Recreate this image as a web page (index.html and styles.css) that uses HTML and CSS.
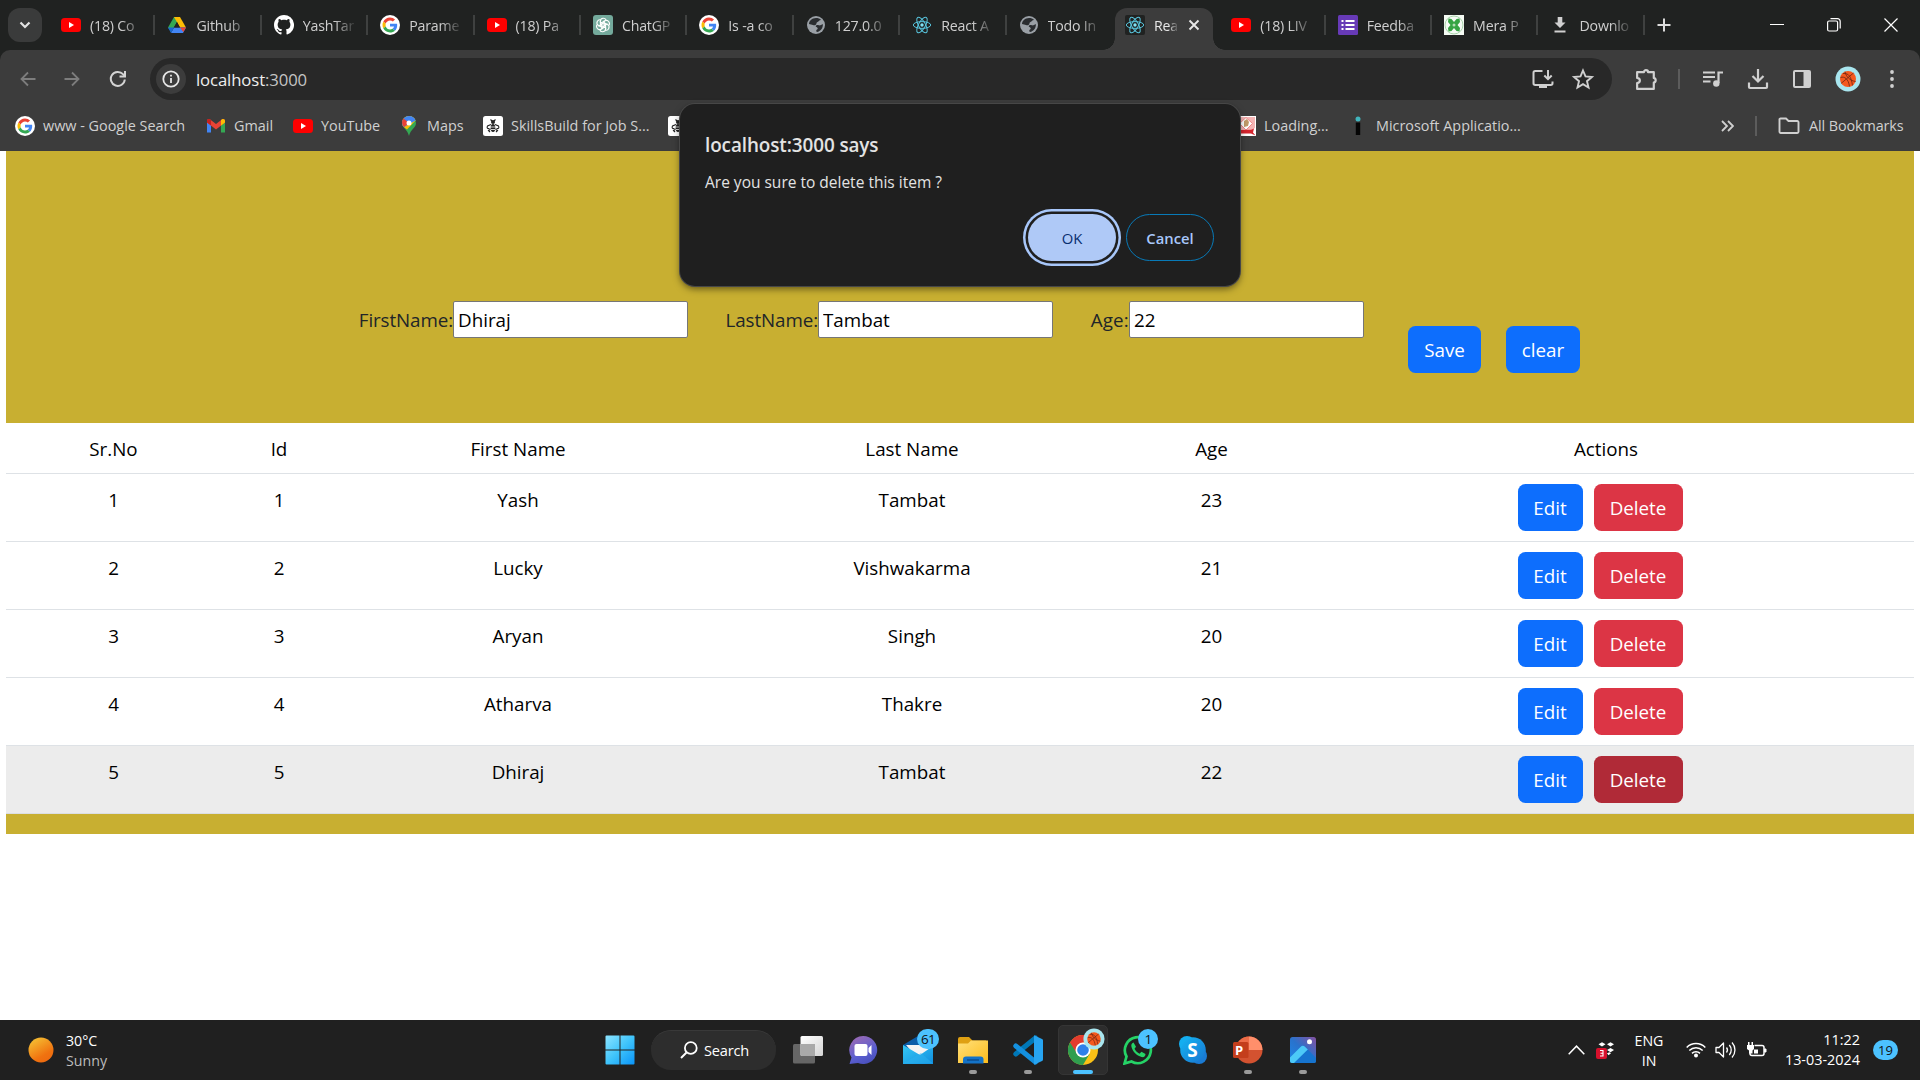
FILE: index.html
```html
<!DOCTYPE html>
<html lang="en">
<head>
<meta charset="utf-8">
<title>React App</title>
<link rel="stylesheet" href="styles.css">
</head>
<body>
<svg class="sprite" aria-hidden="true">
  <defs>
    <linearGradient id="g-win" x1="0" y1="0" x2="1" y2="1"><stop offset="0" stop-color="#8de4ff"/><stop offset=".5" stop-color="#3fc4fb"/><stop offset="1" stop-color="#0a94f8"/></linearGradient>
    <linearGradient id="g-sun" x1="0.1" y1="0" x2=".7" y2="1"><stop offset="0" stop-color="#f5c636"/><stop offset=".75" stop-color="#f0720f"/><stop offset="1" stop-color="#ee6a10"/></linearGradient>
    <linearGradient id="g-chat" x1="0" y1="0" x2=".5" y2="1"><stop offset="0" stop-color="#a56bb0"/><stop offset=".7" stop-color="#5b5fd0"/><stop offset="1" stop-color="#4c52c0"/></linearGradient>
    <linearGradient id="g-mail" x1="0" y1="0" x2="1" y2="1"><stop offset="0" stop-color="#35c8f5"/><stop offset="1" stop-color="#118fdf"/></linearGradient>
    <linearGradient id="g-fold" x1="0" y1="0" x2="1" y2="1"><stop offset="0" stop-color="#ffe07a"/><stop offset="1" stop-color="#fdbc1c"/></linearGradient>
    <linearGradient id="g-photo" x1="0" y1="1" x2="1" y2="0"><stop offset="0" stop-color="#1c86e8"/><stop offset=".5" stop-color="#2a72cc"/><stop offset="1" stop-color="#8650a0"/></linearGradient>
    <linearGradient id="g-task" x1="0" y1="0" x2="1" y2="1"><stop offset="0" stop-color="#fff"/><stop offset="1" stop-color="#d4d4d4"/></linearGradient>
    <linearGradient id="g-skype" x1="0" y1="0" x2="1" y2="1"><stop offset="0" stop-color="#15b4f2"/><stop offset="1" stop-color="#1877d2"/></linearGradient>
  </defs>
  <symbol id="youtube" viewBox="0 0 20 20"><rect y="3" width="20" height="14" rx="3.5" fill="#f00"/><path d="M8 7l5 3-5 3z" fill="#fff"/></symbol>
  <symbol id="drive" viewBox="0 0 20 20"><path d="M7 2h6L4 17 1 12.500z" fill="#34a853"/><path d="M7 2h6l6 10.500h-6z" fill="#fbbc04"/><path d="M7 12.500h12L16 18H4z" fill="#4285f4"/><path d="M13 12.500h6L16.300 17z" fill="#ea4335"/><path d="M10 7l3 5.500H7z" fill="#202221"/><path d="M1 12.500h6L4 18z" fill="#1967d2"/></symbol>
  <symbol id="github" viewBox="0 0 16 16"><path fill="#fff" d="M8 0C3.580 0 0 3.580 0 8c0 3.540 2.290 6.530 5.470 7.590.4.070.55-.17.55-.38 0-.19-.01-.82-.01-1.490-2.010.37-2.530-.49-2.690-.94-.09-.23-.48-.94-.82-1.130-.28-.15-.68-.52-.01-.53.63-.01 1.080.58 1.230.82.72 1.210 1.870.87 2.330.66.07-.52.28-.87.51-1.070-1.780-.2-3.640-.89-3.640-3.950 0-.87.31-1.590.82-2.150-.08-.2-.36-1.020.08-2.120 0 0 .67-.21 2.200.82.64-.18 1.320-.27 2-.27s1.360.09 2 .27c1.530-1.040 2.200-.82 2.200-.82.44 1.100.16 1.920.08 2.120.51.56.82 1.270.82 2.150 0 3.070-1.870 3.750-3.650 3.950.29.25.54.73.54 1.480 0 1.070-.01 1.930-.01 2.200 0 .21.15.46.55.38A8 8 0 0 0 8 0z"/></symbol>
  <symbol id="google" viewBox="0 0 48 48"><circle cx="24" cy="24" r="24" fill="#fff"/><g transform="translate(6 6) scale(.75)"><path fill="#EA4335" d="M24 9.500c3.540 0 6.710 1.220 9.210 3.600l6.850-6.850C35.900 2.380 30.470 0 24 0 14.620 0 6.510 5.380 2.560 13.220l7.980 6.190C12.430 13.720 17.740 9.500 24 9.500z"/><path fill="#4285F4" d="M46.980 24.550c0-1.570-.15-3.090-.38-4.550H24v9.020h12.940c-.58 2.960-2.260 5.480-4.780 7.180l7.730 6c4.510-4.180 7.090-10.360 7.090-17.650z"/><path fill="#FBBC05" d="M10.530 28.590c-.48-1.450-.76-2.990-.76-4.590s.27-3.140.76-4.590l-7.980-6.190C.92 16.460 0 20.120 0 24c0 3.880.92 7.540 2.560 10.780l7.970-6.190z"/><path fill="#34A853" d="M24 48c6.480 0 11.930-2.130 15.890-5.810l-7.730-6c-2.150 1.450-4.920 2.300-8.160 2.300-6.260 0-11.570-4.220-13.470-9.910l-7.980 6.190C6.510 42.620 14.620 48 24 48z"/></g></symbol>
  <symbol id="openai" viewBox="0 0 20 20"><rect width="20" height="20" rx="3" fill="#74aa9c"/><g fill="none" stroke="#fff" stroke-width="1.100"><path id="petal" d="M7.400 11.500V6.200c0-3.700 5.200-3.700 5.800-.8M10 8.500l-4.600 2.700"/><use href="#petal" transform="rotate(60 10 10)"/><use href="#petal" transform="rotate(120 10 10)"/><use href="#petal" transform="rotate(180 10 10)"/><use href="#petal" transform="rotate(240 10 10)"/><use href="#petal" transform="rotate(300 10 10)"/></g></symbol>
  <symbol id="globe" viewBox="0 0 20 20"><circle cx="10" cy="10" r="9" fill="#9aa0a6"/><path d="M10 3c2 0 4 .5 5 2-2 0-2 1.500-3.500 2C10 7.500 11 9 9.500 10S7 9.500 5 9.500L3 9c0-3 3-6 7-6zM16.800 9c.5 4-2.300 7.500-5.800 8-1-.5-1-2 0-2.500 1.500-.7.500-2-.5-2.500-1.500-.7-.5-2 1-2s2 1 3.500 0c.7-.5 1.200-.7 1.800-1z" fill="#2a2d30"/></symbol>
  <symbol id="react" viewBox="0 0 20 20"><g fill="none" stroke="#58c4dc" stroke-width="1"><ellipse cx="10" cy="10" rx="8.700" ry="3.400"/><ellipse cx="10" cy="10" rx="8.700" ry="3.400" transform="rotate(60 10 10)"/><ellipse cx="10" cy="10" rx="8.700" ry="3.400" transform="rotate(120 10 10)"/></g><circle cx="10" cy="10" r="1.700" fill="#7fe3f5"/></symbol>
  <symbol id="forms" viewBox="0 0 20 20"><rect width="20" height="20" rx="1.500" fill="#673ab7"/><path d="M7.500 6h9M7.500 10h9M7.500 14h9" stroke="#fff" stroke-width="2"/><path d="M3.500 6h2M3.500 10h2M3.500 14h2" stroke="#fff" stroke-width="2"/></symbol>
  <symbol id="mera" viewBox="0 0 20 20"><rect width="20" height="20" fill="#f5fbf4"/><circle cx="10" cy="10" r="9" fill="none" stroke="#a9d3ab"/><path d="M4.500 3.500l3 .5L10 7l2.500-3 3-.5.5 3.500-2.500 3 2.500 3-.5 3.500-3-.5L10 13l-2.500 3-3 .5L4 13l2.500-3L4 7z" fill="#36a443"/><circle cx="10" cy="10" r="1.500" fill="#b4dcb4"/></symbol>
  <symbol id="dlfile" viewBox="0 0 20 20"><path d="M7.700 2h4.600v5.500h3.200L10 13 4.500 7.500h3.200zM4.500 15.500h11v2h-11z" fill="#d0d0d0"/></symbol>
  <symbol id="gmail" viewBox="0 0 20 20"><path d="M1 6v10.500h4V9z" fill="#4285f4"/><path d="M15 9v7.500h4V6z" fill="#34a853"/><path d="M1 6.500V5c0-2 2-2.500 3.200-1.500L10 8l5.800-4.500C17 2.500 19 3 19 5v1.500l-9 7z" fill="#ea4335"/><path d="M15 4l.8-.6C17 2.500 19 3 19 5v1.500L15 9.500z" fill="#fbbc04"/><path d="M1 6.500V5c0-2 2-2.500 3.200-1.500L5 4v5.500z" fill="#c5221f"/></symbol>
  <symbol id="maps" viewBox="0 0 20 20"><path d="M10 0a7 7 0 0 1 7 7c0 5-5.500 6-7 13C8.500 13 3 12 3 7a7 7 0 0 1 7-7z" fill="#34a853"/><path d="M10 0a7 7 0 0 1 6.600 4.600L8 13.500C6 11.500 3 10.500 3 7a7 7 0 0 1 7-7z" fill="#fbbc04"/><path d="M10 0a7 7 0 0 1 6.600 4.600L5 11C3.500 9.500 3 8.500 3 7a7 7 0 0 1 7-7z" fill="#4285f4"/><path d="M4.600 2.500L10 7l-5 4C2.500 8.500 2.500 5 4.600 2.500z" fill="#ea4335"/><circle cx="10" cy="7" r="2.500" fill="#fff"/></symbol>
  <symbol id="bee" viewBox="0 0 20 20"><rect width="20" height="20" rx="2.500" fill="#fff"/><g fill="none" stroke="#222" stroke-width="1.100"><path d="M8 8.500L4.500 10c-1 2 0 3 2 2.500M12 8.500l3.500 1.500c1 2 0 3-2 2.500M8 13l-2.500 1.500L7 16M12 13l2.500 1.500L13 16M7.500 3.500L9 5M12.500 3.500L11 5"/></g><circle cx="10" cy="6" r="2" fill="#222"/><ellipse cx="10" cy="12" rx="2.300" ry="4" fill="#222"/><path d="M7.500 11h5M7.500 13.500h5" stroke="#fff" stroke-width=".8"/></symbol>
  <symbol id="crest" viewBox="0 0 20 20"><rect width="20" height="20" fill="#fff"/><path d="M1 1h18v11l-9 5-9-5z" fill="#f5b5b5"/><path d="M10 1.500l6.500 6L10 14 3.500 7.500z" fill="#fff" stroke="#e88"/><path d="M8 5l3-2 2 3-1 4-4 1z" fill="#c09a68"/><path d="M1 12.500l4 1.500 10-.2 3-1.300-1 4 2.500 3-4.500-2H5l-4 2 1.500-3z" fill="#d5252e"/></symbol>
  <symbol id="basketball" viewBox="0 0 26 26"><circle cx="13" cy="13" r="12.500" fill="#a9e6ef"/><circle cx="13" cy="13" r="8" fill="#f4591f"/><g fill="none" stroke="#6b2413" stroke-width=".8"><path d="M6 17.500L18.500 7M10 5.700c1 5 5 9 10.600 9.800M8 7.500c6-.5 8 3 9.500 12M5.500 11.500c4-1.500 8 1.500 9 9"/></g></symbol>
  <symbol id="laptop-dl" viewBox="0 0 24 24"><path d="M11.500 4H4.200A1.700 1.700 0 0 0 2.500 5.700v10.600A1.700 1.700 0 0 0 4.200 18h15.600a1.700 1.700 0 0 0 1.700-1.700V14.500" fill="none" stroke="#d0d0d0" stroke-width="2"/><path d="M8 18h8v3H8z" fill="#d0d0d0"/><path d="M17 3v9M13.300 8.500L17 12.200l3.700-3.700" fill="none" stroke="#d0d0d0" stroke-width="2"/></symbol>
  <symbol id="star" viewBox="0 0 24 24"><path d="M12 3.500l2.500 5.900 6.400.6-4.900 4.200 1.500 6.300L12 17.100l-5.500 3.400L8 14.200 3.100 10l6.400-.6z" fill="none" stroke="#d0d0d0" stroke-width="1.900"/></symbol>
  <symbol id="puzzle" viewBox="0 0 24 24"><path d="M3 5h6.500a2 2 0 0 1 4 0H19v5.500a2.300 2.300 0 0 1 0 4.500v6H3v-5.500c3.500-.5 3.500-4.500 0-5z" fill="none" stroke="#d0d0d0" stroke-width="2.100" stroke-linejoin="round"/></symbol>
  <symbol id="chevron" viewBox="0 0 14 14"><path d="M2.500 4.500L7 9l4.500-4.500" fill="none" stroke="#e2e2e2" stroke-width="2.200"/></symbol>
</svg>

<div class="screen">
<header class="tabstrip">
  <button class="tabsearch"><svg width="14" height="14"><use href="#chevron"/></svg></button>
  <nav class="tabs">
    <div class="tab"><svg class="fav"><use href="#youtube"/></svg><span>(18) Co</span></div>
    <div class="tab"><svg class="fav"><use href="#drive"/></svg><span>Github</span></div>
    <div class="tab"><svg class="fav"><use href="#github"/></svg><span>YashTar</span></div>
    <div class="tab"><svg class="fav"><use href="#google"/></svg><span>Parame</span></div>
    <div class="tab"><svg class="fav"><use href="#youtube"/></svg><span>(18) Pa</span></div>
    <div class="tab"><svg class="fav"><use href="#openai"/></svg><span>ChatGP</span></div>
    <div class="tab"><svg class="fav"><use href="#google"/></svg><span>Is -a co</span></div>
    <div class="tab"><svg class="fav"><use href="#globe"/></svg><span>127.0.0</span></div>
    <div class="tab"><svg class="fav"><use href="#react"/></svg><span>React A</span></div>
    <div class="tab no-sep"><svg class="fav"><use href="#globe"/></svg><span>Todo In</span></div>
    <div class="tab active"><svg class="fav dark"><use href="#react"/></svg><span>Rea</span><svg class="tabclose" width="12" height="12" viewBox="0 0 12 12"><path d="M1.500 1.500l9 9M10.500 1.500l-9 9" stroke="#e8e8e8" stroke-width="1.900"/></svg></div>
    <div class="tab"><svg class="fav"><use href="#youtube"/></svg><span>(18) LIV</span></div>
    <div class="tab"><svg class="fav"><use href="#forms"/></svg><span>Feedba</span></div>
    <div class="tab"><svg class="fav"><use href="#mera"/></svg><span>Mera P</span></div>
    <div class="tab"><svg class="fav"><use href="#dlfile"/></svg><span>Downlo</span></div>
  </nav>
  <svg class="newtab" width="14" height="14" viewBox="0 0 14 14"><path d="M7 .5v13M.5 7h13" stroke="#dcdcdc" stroke-width="2"/></svg>
  <div class="winbtns">
    <svg width="14" height="14" viewBox="0 0 14 14"><path d="M0 6.500h14" stroke="#fff"/></svg>
    <svg width="14" height="14" viewBox="0 0 14 14"><rect x=".6" y="3" width="10" height="10" rx="1.500" fill="none" stroke="#fff" stroke-width="1.200"/><path d="M3.500.7h7a2.700 2.700 0 0 1 2.700 2.700v7" fill="none" stroke="#fff" stroke-width="1.200"/></svg>
    <svg width="14" height="14" viewBox="0 0 14 14"><path d="M.5.5l13 13M13.500.5l-13 13" stroke="#fff" stroke-width="1.200"/></svg>
  </div>
</header>

<section class="chrome">
  <div class="toolbar">
    <svg width="16" height="16" viewBox="0 0 16 16"><path d="M15.500 8H2M8 1.500L1.500 8 8 14.500" fill="none" stroke="#7d7d7d" stroke-width="1.800"/></svg>
    <svg width="16" height="16" viewBox="0 0 16 16"><path d="M.5 8H14M8 1.500L14.500 8 8 14.500" fill="none" stroke="#7d7d7d" stroke-width="1.800"/></svg>
    <svg width="18" height="18" viewBox="0 0 18 18"><path d="M15.800 9.500A7 7 0 1 1 14 4.200L16 6" fill="none" stroke="#d4d4d4" stroke-width="2"/><path d="M17 1v6.500h-6.500V5.600H15V1z" fill="#d4d4d4"/></svg>
    <div class="omnibox">
      <span class="info"><svg width="18" height="18" viewBox="0 0 18 18"><circle cx="9" cy="9" r="7.700" fill="none" stroke="#e6e6e6" stroke-width="1.800"/><path d="M9 8v5M9 4.700v1.800" stroke="#e6e6e6" stroke-width="1.800"/></svg></span>
      <span class="url">localhost<i>:3000</i></span>
      <svg width="24" height="24"><use href="#laptop-dl"/></svg>
      <svg width="24" height="24"><use href="#star"/></svg>
    </div>
    <svg width="25" height="25"><use href="#puzzle"/></svg>
    <span class="vline"></span>
    <svg width="22" height="20" viewBox="0 0 22 20"><path d="M1 3.500h12M1 8h12M1 12.500h7.500" stroke="#d0d0d0" stroke-width="2"/><path d="M16.500 14V3.500H21" fill="none" stroke="#d0d0d0" stroke-width="2.200"/><circle cx="14.300" cy="14.500" r="3.200" fill="#d0d0d0"/></svg>
    <svg width="22" height="22" viewBox="0 0 22 22"><path d="M11 1v12M5.500 8l5.500 5.500L16.500 8M2 14.500V19a1 1 0 0 0 1 1h16a1 1 0 0 0 1-1v-4.500" fill="none" stroke="#d0d0d0" stroke-width="2.200"/></svg>
    <svg width="18" height="18" viewBox="0 0 18 18"><rect x="1" y="1" width="16" height="16" rx="1" fill="none" stroke="#d0d0d0" stroke-width="2"/><path d="M10.500 1H17v16h-6.500z" fill="#d0d0d0"/></svg>
    <svg width="26" height="26"><use href="#basketball"/></svg>
    <svg width="6" height="18" viewBox="0 0 6 18"><circle cx="3" cy="2" r="1.900" fill="#d0d0d0"/><circle cx="3" cy="9" r="1.900" fill="#d0d0d0"/><circle cx="3" cy="16" r="1.900" fill="#d0d0d0"/></svg>
  </div>
  <div class="bookmarks">
    <a><svg class="fav"><use href="#google"/></svg><span>www - Google Search</span></a>
    <a><svg class="fav"><use href="#gmail"/></svg><span>Gmail</span></a>
    <a><svg class="fav"><use href="#youtube"/></svg><span>YouTube</span></a>
    <a><svg class="fav"><use href="#maps"/></svg><span>Maps</span></a>
    <a><svg class="fav"><use href="#bee"/></svg><span>SkillsBuild for Job S...</span></a>
    <a><svg class="fav"><use href="#bee"/></svg></a>
    <a><svg class="fav"><use href="#crest"/></svg><span>Loading...</span></a>
    <a><svg class="fav" viewBox="0 0 20 20"><circle cx="10" cy="3" r="2.500" fill="#41b5bd"/><path d="M7.800 6.500h4.400V19H7.800z" fill="#050505"/></svg><span>Microsoft Applicatio...</span></a>
    <svg class="more" width="13" height="12" viewBox="0 0 13 12"><path d="M1 1l5 5-5 5M7 1l5 5-5 5" fill="none" stroke="#d0d0d0" stroke-width="1.800"/></svg>
    <span class="vline"></span>
    <a><svg width="22" height="18" viewBox="0 0 22 18"><path d="M1.500 3A1.200 1.200 0 0 1 2.700 1.500H8l2.500 2.500h8.800A1.200 1.200 0 0 1 20.500 5.200v9.600a1.200 1.200 0 0 1-1.200 1.200H2.700a1.200 1.200 0 0 1-1.200-1.200z" fill="none" stroke="#d0d0d0" stroke-width="1.900"/></svg><span>All Bookmarks</span></a>
  </div>
</section>

<main class="page">
  <div class="app">
    <form class="entry">
      <label class="f1">FirstName:<input type="text" value="Dhiraj"></label>
      <label class="f2">LastName:<input type="text" value="Tambat"></label>
      <label class="f3">Age:<input type="text" value="22"></label>
      <button type="button" class="btn save">Save</button>
      <button type="button" class="btn clear">clear</button>
    </form>
    <table>
      <colgroup><col class="c-sr"><col class="c-id"><col class="c-fn"><col class="c-ln"><col class="c-age"><col></colgroup>
      <thead><tr><td>Sr.No</td><td>Id</td><td>First Name</td><td>Last Name</td><td>Age</td><td>Actions</td></tr></thead>
      <tbody>
        <tr><td>1</td><td>1</td><td>Yash</td><td>Tambat</td><td>23</td><td><div class="acts"><button class="btn">Edit</button><button class="btn del">Delete</button></div></td></tr>
        <tr><td>2</td><td>2</td><td>Lucky</td><td>Vishwakarma</td><td>21</td><td><div class="acts"><button class="btn">Edit</button><button class="btn del">Delete</button></div></td></tr>
        <tr><td>3</td><td>3</td><td>Aryan</td><td>Singh</td><td>20</td><td><div class="acts"><button class="btn">Edit</button><button class="btn del">Delete</button></div></td></tr>
        <tr><td>4</td><td>4</td><td>Atharva</td><td>Thakre</td><td>20</td><td><div class="acts"><button class="btn">Edit</button><button class="btn del">Delete</button></div></td></tr>
        <tr class="hovered"><td>5</td><td>5</td><td>Dhiraj</td><td>Tambat</td><td>22</td><td><div class="acts"><button class="btn">Edit</button><button class="btn del">Delete</button></div></td></tr>
      </tbody>
    </table>
  </div>
</main>

<footer class="taskbar">
  <div class="weather"><svg width="26" height="26"><circle cx="13" cy="13" r="12.500" fill="url(#g-sun)"/></svg><p>30°C<br><em>Sunny</em></p></div>
  <div class="dock">
    <span class="app-icon start"><svg width="30" height="30" viewBox="0 0 30 30"><path d="M1.500.5H14.500v14H.5v-13a1 1 0 0 1 1-1zM15.500.5h13a1 1 0 0 1 1 1v13h-14zM.5 15.500h14v14h-13a1 1 0 0 1-1-1zM15.500 15.500h14v13a1 1 0 0 1-1 1h-13z" fill="url(#g-win)"/></svg></span>
    <span class="search"><svg width="18" height="18" viewBox="0 0 18 18"><circle cx="10.800" cy="7" r="5.900" fill="none" stroke="#fff" stroke-width="1.800"/><path d="M6.500 11.500L1 17" stroke="#fff" stroke-width="2"/></svg>Search</span>
    <span class="app-icon"><svg width="30" height="30" viewBox="0 0 30 30"><rect x="0" y="9" width="22" height="19.500" rx="1.500" fill="#666"/><rect x="7.500" y="1" width="22.500" height="20" rx="1.500" fill="url(#g-task)"/><path d="M7.500 9H22v12H9a1.500 1.500 0 0 1-1.500-1.500z" fill="#a9a9a9"/></svg></span>
    <span class="app-icon"><svg width="30" height="30" viewBox="0 0 30 30"><path d="M15 1a14 14 0 1 1-5 27L1.500 29l2-6.500A14 14 0 0 1 15 1z" fill="url(#g-chat)"/><rect x="6.500" y="9" width="13" height="12" rx="2" fill="#fff"/><path d="M20.500 13l3-3v10l-3-3z" fill="#fff"/></svg></span>
    <span class="app-icon"><svg width="30" height="30" viewBox="0 0 30 30"><path d="M0 10L15 1l15 9v6H0z" fill="#0a5ca8"/><path d="M3 10h24v8l-12 6z" fill="#f3f3f3"/><path d="M0 10l17 10L30 11v18H0z" fill="url(#g-mail)"/><path d="M0 28.500L18 18l12 10.500z" fill="#2bb2ef" opacity=".5"/></svg><b class="badge">61</b></span>
    <span class="app-icon run"><svg width="30" height="30" viewBox="0 0 30 30"><path d="M0 4a2 2 0 0 1 2-2h9l3.500 3.500H28V12H0z" fill="#dfa012"/><path d="M0 8.500h10L13 5.500h17V28H0z" fill="url(#g-fold)"/><path d="M5 28.500v-4a3 3 0 0 1 3-3h14.500a3 3 0 0 1 3 3v4z" fill="#1473c8"/><path d="M9 25h12" stroke="#0b4d8f" stroke-width="1.500"/></svg></span>
    <span class="app-icon run"><svg width="30" height="30" viewBox="0 0 30 30"><path d="M2.800 19L22.500 3" stroke="#0078b8" stroke-width="5" stroke-linecap="round"/><path d="M2.800 11L22.500 27" stroke="#1490df" stroke-width="5" stroke-linecap="round"/><path d="M21 .2L29 4a1.500 1.500 0 0 1 1 1.400v19.200a1.500 1.500 0 0 1-1 1.400l-8 3.800z" fill="#27a4f1"/></svg></span>
    <span class="app-icon run current"><svg width="30" height="30" viewBox="0 0 30 30"><circle cx="15" cy="15" r="15" fill="#fbc116"/><path d="M15 15L2 7.500A15 15 0 0 0 15 30l6.500-11z" fill="#2f9e4f"/><path d="M2 7.500A15 15 0 0 1 28 7.500H15L9 18.500z" fill="#e33b2e"/><circle cx="15" cy="15" r="7.500" fill="#fff"/><circle cx="15" cy="15" r="5.800" fill="#2f80ea"/></svg><svg class="avatar" width="22" height="22"><use href="#basketball"/></svg></span>
    <span class="app-icon"><svg width="30" height="30" viewBox="0 0 30 30"><path d="M1.500 28.500l2-7A13 13 0 1 1 8.500 26.500z" fill="none" stroke="#25d366" stroke-width="2.700"/><path d="M10.500 7.500c-2 .5-2.500 2.500-2 4.500 1.500 5 5 8.500 10 10 2.500.5 4-.5 4-3l-4-2.300-2 2c-2-1-4-3-5-5l1.500-2z" fill="#25d366"/></svg><b class="badge one">1</b></span>
    <span class="app-icon"><svg width="30" height="30" viewBox="0 0 30 30"><circle cx="15" cy="15" r="12.800" fill="url(#g-skype)"/><circle cx="9" cy="9" r="8" fill="#14aef0"/><circle cx="21" cy="21" r="8" fill="#1a7bd4"/><circle cx="15" cy="15" r="12" fill="url(#g-skype)"/></svg><b class="skype-s">S</b></span>
    <span class="app-icon run"><svg width="30" height="30" viewBox="0 0 30 30"><circle cx="16" cy="15" r="13.500" fill="#d35230"/><path d="M16 1.500A13.500 13.500 0 0 1 29.500 15H16z" fill="#ff8f6b"/><path d="M16 1.500V15H2.500A13.500 13.500 0 0 1 16 1.500z" fill="#ed6c47"/><rect y="7" width="15.500" height="16" rx="1.500" fill="#c43e1c"/></svg><b class="ppt-p">P</b></span>
    <span class="app-icon run"><svg width="30" height="30" viewBox="0 0 30 30"><rect x="2" y="2" width="26" height="26" rx="2.500" fill="url(#g-photo)"/><path d="M12.500 12a3.300 3.300 0 0 1 4.700 0L28 23v3a2 2 0 0 1-2 2H6z" fill="#1674cf"/><path d="M2 22.500L12.500 12a3.300 3.300 0 0 1 4.700 0l2.600 2.500L6 28H4a2 2 0 0 1-2-2z" fill="#4cc9f7"/><circle cx="21.500" cy="6.800" r="2.500" fill="#fff"/></svg></span>
  </div>
  <div class="tray">
    <svg width="17" height="10" viewBox="0 0 17 10"><path d="M.7 9.300L8.500 1.200l7.800 8.100" fill="none" stroke="#fff" stroke-width="1.500"/></svg>
    <svg width="20" height="20" viewBox="0 0 20 20"><path d="M6 2.200L9.500 4.300 6 6.400 2.500 4.300zM14.500 2.200L18 4.300 14.500 6.400 11 4.300zM14.500 8L18 10l-3.500 2.200L11 10zM11 13.200l2.500-1 1.500 1-2.500 2z" fill="#fff"/><rect y="8" width="11" height="11" rx="2" fill="#d6102c"/><path d="M4 10.500h3v5.500H4M4.500 13.200H7" fill="none" stroke="#fff" stroke-width="1.100"/></svg>
    <span class="lang">ENG<br>IN</span>
    <svg width="20" height="16" viewBox="0 0 20 16"><g fill="none" stroke="#fff" stroke-width="1.500"><path d="M.7 5.500a13 13 0 0 1 18.600 0M3.300 8.500a9.500 9.500 0 0 1 13.400 0M6 11.400a5.700 5.700 0 0 1 8 0"/></g><circle cx="10" cy="13.600" r="2" fill="#fff"/></svg>
    <svg width="21" height="18" viewBox="0 0 21 18"><path d="M1 6.500h3l4.500-4.500v14L4 11.500H1z" fill="none" stroke="#fff" stroke-width="1.300" stroke-linejoin="round"/><path d="M11.500 6.500a4 4 0 0 1 0 5M14.300 4a7.500 7.500 0 0 1 0 10M17 1.500a11 11 0 0 1 0 15" fill="none" stroke="#fff" stroke-width="1.300"/></svg>
    <svg width="21" height="18" viewBox="0 0 21 18"><path d="M8.500 4.500H16a2 2 0 0 1 2 2v6a2 2 0 0 1-2 2H6a2 2 0 0 1-2-2V10" fill="none" stroke="#fff" stroke-width="1.500"/><path d="M18.500 8h1.500v3h-1.500z" fill="#fff" stroke="#fff"/><path d="M1 4h7v4L6.500 9.500v3H3V9.500L1 8zM2 1h1.500v3H2zM5.500 1H7v3H5.500zM8 8.500h4v4H8z" fill="#fff"/></svg>
    <span class="clock">11:22<br>13-03-2024</span>
    <span class="notif">19</span>
  </div>
</footer>

<div class="dialog" role="alertdialog">
  <h2>localhost:3000 says</h2>
  <p>Are you sure to delete this item ?</p>
  <div class="dialog-btns"><button class="ok">OK</button><button class="cancel">Cancel</button></div>
</div>
</div>
</body>
</html>
```
FILE: styles.css
```css
* { box-sizing: border-box; }
body { margin: 0; font-family: "Open Sans", "Noto Sans", sans-serif; font-size: 14px; color: #000; background: #fff; }
button, input { font: inherit; }
p, h2 { margin: 0; }
svg { display: block; flex: none; }
.sprite { position: absolute; width: 0; height: 0; }
.screen { position: relative; width: 1920px; height: 1080px; overflow: hidden; display: flex; flex-direction: column; }
.fav { width: 20px; height: 20px; }

/* Tab strip */
.tabstrip { height: 50px; background: #202221; display: flex; align-items: center; flex: none; }
.tabsearch { width: 34px; height: 34px; margin-left: 8px; padding: 0; border: 0; border-radius: 12px; background: #3a3b3b; display: flex; align-items: center; justify-content: center; }
.tabs { display: flex; margin-left: 9px; height: 50px; }
.tab { position: relative; width: 106.4px; height: 50px; padding-left: 10px; display: flex; align-items: center; gap: 9px; color: #cfcfcf; font-size: 14.2px; }
.tab span { width: 54px; white-space: nowrap; letter-spacing: -.2px; -webkit-mask-image: linear-gradient(90deg, #000 58%, transparent); mask-image: linear-gradient(90deg, #000 58%, transparent); }
.tab:not(.no-sep):not(.active)::after { content: ""; position: absolute; right: 2px; top: 15px; width: 2px; height: 20px; background: #3f4140; }
.tab.active { width: 98.4px; height: 42px; margin: 8px 8px 0 0; padding: 0 0 8px 10px; background: #3c3c3c; border-radius: 12px 12px 0 0; color: #e6e6e6; }
.tab.active::before, .tab.active::after { content: ""; position: absolute; bottom: 0; width: 12px; height: 12px; }
.tab.active::before { left: -12px; background: radial-gradient(circle at 0 0, transparent 11.5px, #3c3c3c 12px); }
.tab.active::after { right: -12px; background: radial-gradient(circle at 100% 0, transparent 11.5px, #3c3c3c 12px); }
.tab.active span { width: 25px; }
.tab.active .tabclose { margin-left: 0; }
.dark { background: #202221; border-radius: 2px; }
.newtab { margin-left: 10px; }
.winbtns { margin-left: auto; margin-right: 22px; display: flex; gap: 43px; }

/* Toolbar and bookmarks */
.chrome { height: 101px; flex: none; background: #202221; position: relative; isolation: isolate; }
.chrome::before { content: ""; position: absolute; inset: 0; background: #3c3c3c; border-radius: 10px 10px 0 0; z-index: -1; }
.toolbar { height: 58px; padding-left: 6px; display: grid; grid-template-columns: 44px 44px 48px 1482px 44px 22px 46px 43px 46px 45px 44px; place-items: center; }
.omnibox { width: 1462px; height: 42px; border-radius: 21px; background: #282828; display: flex; align-items: center; padding: 0 17px 0 6px; gap: 16px; justify-self: start; margin-left: 8px; }
.info { width: 30px; height: 30px; border-radius: 50%; background: #3c3c3c; display: flex; align-items: center; justify-content: center; }
.url { flex: 1; margin-left: -6px; font-size: 16.7px; color: #eee; letter-spacing: -.1px; }
.url i { font-style: normal; color: #c4c4c4; }
.vline { width: 2px; height: 20px; background: #5c5c5c; }
.bookmarks { height: 36px; padding-left: 15px; display: grid; grid-template-columns: 191px 87px 106px 84px 185px 568px 112px 365px 28px 29px 148px; align-items: center; color: #d0d0d0; font-size: 14.4px; }
.bookmarks a { display: flex; align-items: center; gap: 8px; white-space: nowrap; }
.bookmarks a span { margin-top: -2px; }
.bookmarks a:last-child { gap: 9px; padding-left: 8px; letter-spacing: -.1px; }
.bookmarks .vline { justify-self: center; }
.more { justify-self: center; }

/* Page */
.page { height: 869px; background: #fff; padding: 0 6px; flex: none; }
.app { background: #c8af31; height: 683px; font-size: 18.8px; line-height: 30px; }
.entry { height: 272px; padding: 150px 0 0 353px; display: flex; align-items: flex-start; color: #212529; }
.entry label { display: flex; align-items: center; justify-content: flex-end; height: 37px; white-space: nowrap; letter-spacing: -.1px; }
.entry input { width: 235px; height: 37px; padding: 1px 4px; border: 1px solid #767676; border-radius: 2px; background: #fff; color: #000; outline: 0; flex: none; }
.f1 { width: 329px; }
.f2 { width: 365px; }
.f3 { width: 311px; }
.entry .f3 { letter-spacing: .2px; }
.btn { height: 47px; width: 65px; padding: 1px 0 0; border: 0; border-radius: 7.5px; background: #0d6efd; color: #fff; font-size: 18.8px; line-height: 30px; }
.save { width: 73px; margin: 25px 25px 0 44px; }
.clear { width: 74px; margin-top: 25px; }
table { width: 1908px; table-layout: fixed; border-collapse: separate; border-spacing: 0; background: #fff; text-align: center; }
.c-sr { width: 215px; } .c-id { width: 116px; } .c-fn { width: 362px; } .c-ln { width: 426px; } .c-age { width: 173px; }
td { padding: 11px 10px 9px; border-bottom: 1px solid #dee2e6; vertical-align: top; }
tbody td { height: 68px; }
.hovered td { background: #ececec; border-color: #dcdfe2; }
.acts { display: flex; justify-content: center; gap: 11px; padding-right: 12px; margin-top: -1px; }
.del { width: 89px; background: #dc3545; }
.hovered .del { background: #b02a37; }

/* Taskbar */
.taskbar { height: 60px; background: #202020; color: #fff; display: flex; align-items: center; font-size: 14.2px; line-height: 20px; flex: none; }
.weather { display: flex; align-items: center; gap: 12px; padding-left: 28px; width: 592px; }
.weather p { padding-top: 1px; }
.weather em { font-style: normal; color: #bdbdbd; }
.dock { display: flex; align-items: center; }
.app-icon { position: relative; width: 55px; height: 50px; display: flex; align-items: center; justify-content: center; }
.search { width: 125px; height: 40px; margin: 0 4px; border-radius: 20px; background: #2d2d2d; border-top: 1px solid #393939; display: flex; align-items: center; gap: 6px; padding: 0 0 1px 29px; font-size: 14.6px; letter-spacing: -.2px; }
.run::after { content: ""; position: absolute; bottom: 1px; left: 50%; width: 8px; height: 4px; margin-left: -4px; border-radius: 2px; background: #9a9a9a; }
.current::before { content: ""; position: absolute; inset: 0 2.5px; border-radius: 5px; background: #2d2d2d; border: 1px solid #353535; }
.current svg { position: relative; }
.current::after { width: 20px; margin-left: -10px; background: #4cc2ff; }
.current .avatar { position: absolute; left: 28px; top: 3px; }
.badge { position: absolute; left: 27px; top: 4px; width: 22px; height: 20px; border-radius: 10px; background: #4cc2ff; color: #111; font-weight: 400; font-size: 13.5px; line-height: 20px; text-align: center; letter-spacing: -.8px; }
.badge.one { width: 20px; left: 28px; }
.skype-s, .ppt-p { position: absolute; color: #fff; font-weight: 700; }
.skype-s { font-size: 19px; }
.ppt-p { font-size: 13px; left: 15px; top: 15px; }
.tray { margin-left: auto; display: grid; grid-template-columns: 28px 34px 56px 29px 31px 20px 94px 60px; align-items: center; width: 352px; }
.lang { text-align: center; padding: 1px 18px 0 0; }
.clock { text-align: right; font-size: 14.4px; white-space: nowrap; }
.notif { width: 25px; height: 20px; border-radius: 10px; margin-left: 13px; background: #4cc2ff; color: #111; text-align: center; font-size: 13px; }

/* Confirm dialog */
.dialog { position: absolute; left: 680px; top: 104px; width: 560px; height: 182px; padding: 26px 26px 0 25px; border-radius: 15px; background: #1f1f1f; color: #e3e3e3; box-shadow: 0 0 0 1px #474747, 0 3px 7px rgba(0,0,0,.5); }
.dialog h2 { font-size: 18.9px; line-height: 30px; font-weight: 600; letter-spacing: -.1px; }
.dialog p { margin-top: 12px; font-size: 15.5px; line-height: 20px; }
.dialog-btns { display: flex; justify-content: flex-end; gap: 10px; margin-top: 22px; }
.dialog-btns button { width: 88px; height: 47px; border-radius: 24px; padding: 0; font-size: 14.8px; border: 0; }
.ok { background: #afc9f7; color: #082e6f; font-weight: 500; box-shadow: 0 0 0 2.5px #1f1f1f, 0 0 0 5px #a8c7fa; }
.dialog-btns .cancel { background: transparent; color: #a8c7fa; border: 1.5px solid #087ab8; font-weight: 600; }
```
